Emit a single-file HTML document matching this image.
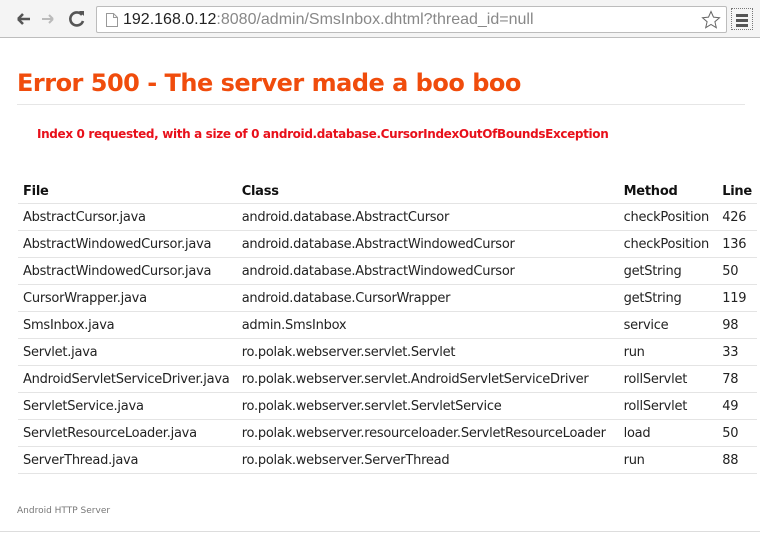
<!DOCTYPE html>
<html><head><meta charset="utf-8"><style>
*{margin:0;padding:0;box-sizing:border-box}
body{width:760px;height:538px;background:#fff;font-family:"DejaVu Sans","Liberation Sans",sans-serif;overflow:hidden;position:relative}
.bar{position:absolute;left:0;top:0;width:760px;height:38px;background:#f4f4f4;border-bottom:1px solid #bdbdbd}
.url{position:absolute;left:96px;top:6px;width:631px;height:27px;background:#fff;border:1px solid #bcbcbc;border-radius:2px}
.url span{position:absolute;left:26px;top:4px;font-family:"Liberation Sans",sans-serif;font-size:16px;color:#888}
.url b{font-weight:normal;color:#222}
.menu{position:absolute;left:731px;top:8px;width:22px;height:22px;border:1px dotted #777}
.menu i{position:absolute;left:4px;width:12px;height:3px;background:#555}
h1{position:absolute;left:17px;top:69px;font-size:24px;color:#f04c0c;font-weight:bold;letter-spacing:-0.5px;white-space:nowrap}
.hr{position:absolute;left:17px;top:104px;width:728px;height:1px;background:#e6e6e6}
.msg{position:absolute;left:37px;top:127px;font-size:12px;font-weight:bold;color:#e8101a;white-space:nowrap;letter-spacing:-0.35px}
table{position:absolute;left:18px;top:179px;border-collapse:separate;border-spacing:0;font-size:13px;color:#222;width:739px}
td,th{height:27px;padding:0 5px;text-align:left;white-space:nowrap;border-bottom:1px solid #e4e4e4;letter-spacing:-0.25px}
th{font-weight:bold;color:#111;height:25px}
.foot{position:absolute;left:17px;top:506px;font-size:9px;color:#777}
.bl{position:absolute;left:0;top:531px;width:760px;height:1px;background:#ddd}
</style></head><body>
<div class="bar">
<svg width="90" height="38" style="position:absolute;left:0;top:0">
<path d="M18 19h12M18 19l5-5M18 19l5 5" stroke="#555" stroke-width="2.6" fill="none"/>
<path d="M42 19h11M53 19l-4-4M53 19l-4 4" stroke="#bbb" stroke-width="2" fill="none"/>
<path d="M82 15a6.5 6.5 0 1 0 1 6" stroke="#555" stroke-width="2.6" fill="none"/><path d="M79 11l5 0 0 5z" fill="#555"/>
</svg>
<div class="url"><svg width="14" height="16" style="position:absolute;left:8px;top:5px"><path d="M1.5 1.5h7l4 4v9h-11z M8.5 1.5v4h4" stroke="#999" fill="#fff"/></svg><span><b>192.168.0.12</b>:8080/admin/SmsInbox.dhtml?thread_id=null</span>
<svg width="20" height="20" style="position:absolute;left:604px;top:3px"><path d="M10 1.5l2.5 5.6 6 .6-4.6 4 1.4 6-5.3-3.2-5.3 3.2 1.4-6-4.6-4 6-.6z" stroke="#666" fill="none"/></svg></div>
<div class="menu"><i style="top:5px"></i><i style="top:10px"></i><i style="top:15px"></i></div>
</div>
<h1>Error 500 - The server made a boo boo</h1>
<div class="hr"></div>
<div class="msg">Index 0 requested, with a size of 0 android.database.CursorIndexOutOfBoundsException</div>
<table>
<tr><th style="width:219px">File</th><th style="width:383px">Class</th><th style="width:99px">Method</th><th>Line</th></tr>
<tr><td>AbstractCursor.java</td><td>android.database.AbstractCursor</td><td>checkPosition</td><td>426</td></tr>
<tr><td>AbstractWindowedCursor.java</td><td>android.database.AbstractWindowedCursor</td><td>checkPosition</td><td>136</td></tr>
<tr><td>AbstractWindowedCursor.java</td><td>android.database.AbstractWindowedCursor</td><td>getString</td><td>50</td></tr>
<tr><td>CursorWrapper.java</td><td>android.database.CursorWrapper</td><td>getString</td><td>119</td></tr>
<tr><td>SmsInbox.java</td><td>admin.SmsInbox</td><td>service</td><td>98</td></tr>
<tr><td>Servlet.java</td><td>ro.polak.webserver.servlet.Servlet</td><td>run</td><td>33</td></tr>
<tr><td>AndroidServletServiceDriver.java</td><td>ro.polak.webserver.servlet.AndroidServletServiceDriver</td><td>rollServlet</td><td>78</td></tr>
<tr><td>ServletService.java</td><td>ro.polak.webserver.servlet.ServletService</td><td>rollServlet</td><td>49</td></tr>
<tr><td>ServletResourceLoader.java</td><td>ro.polak.webserver.resourceloader.ServletResourceLoader</td><td>load</td><td>50</td></tr>
<tr><td>ServerThread.java</td><td>ro.polak.webserver.ServerThread</td><td>run</td><td>88</td></tr>
</table>
<div class="foot">Android HTTP Server</div>
<div class="bl"></div>
</body></html>
